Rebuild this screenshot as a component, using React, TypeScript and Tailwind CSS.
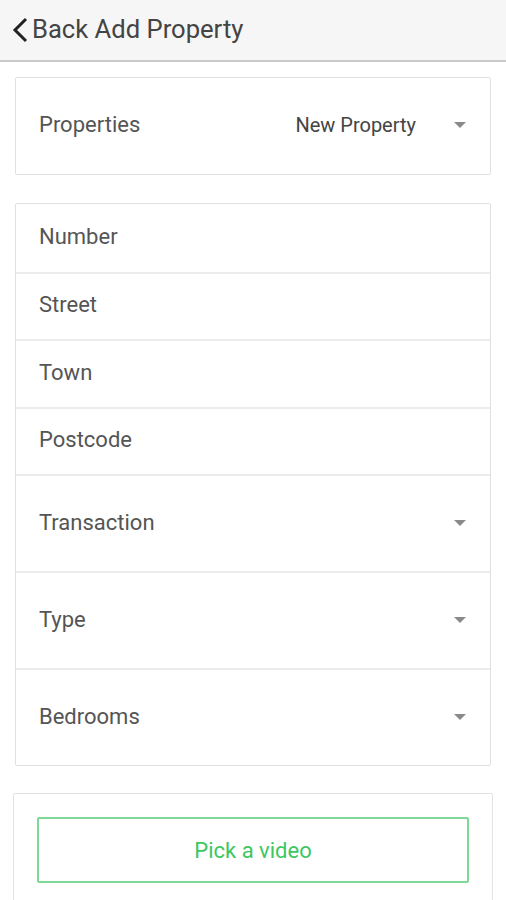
import React from 'react';

const Caret = () => (
    <svg width="14" height="8" viewBox="0 0 14 8" className="shrink-0">
        <path d="M1 1 L7 7 L13 1 Z" fill="#8a8a8a" />
    </svg>
);

const rows = [
    { label: 'Number', tall: false },
    { label: 'Street', tall: false },
    { label: 'Town', tall: false },
    { label: 'Postcode', tall: false },
    { label: 'Transaction', tall: true },
    { label: 'Type', tall: true },
    { label: 'Bedrooms', tall: true },
];

const App = () => {
    return (
        <div className="min-h-[900px] bg-white text-[#555] font-['Roboto',sans-serif] overflow-hidden">
            {/* Barra superior */}
            <div className="h-[62px] bg-[#f6f6f6] border-b-2 border-[#c9c9c9] flex items-center pl-[11px] pb-[1px]">
                <svg width="18" height="26" viewBox="0 0 18 26" className="mr-[3px]">
                    <path d="M15 2 L4 13 L15 24" fill="none" stroke="#222" strokeWidth="3" />
                </svg>
                <span className="text-[25.6px] text-[#444] leading-none">Back Add Property</span>
            </div>

            {/* Selector de propiedades */}
            <div className="mx-[15px] mt-[15px] h-[98px] border border-[#e0e0e0] rounded-[2px] flex items-center pl-[23px] pr-[23px] pb-[2px]">
                <span className="text-[22px] flex-1 leading-none">Properties</span>
                <span className="text-[20px] text-[#444] mr-[37px] leading-none">New Property</span>
                <Caret />
            </div>

            {/* Formulario */}
            <div className="mx-[15px] mt-[28px] border border-[#e0e0e0] rounded-[2px]">
                {rows.map((r, i) => (
                    <div
                        key={r.label}
                        className={`flex items-center pl-[23px] pr-[23px] pb-[2px] ${r.tall ? 'h-[97px]' : 'h-[67.5px]'} ${i > 0 ? 'border-t-2 border-[#ececec]' : ''}`}
                    >
                        <span className="text-[22px] flex-1 leading-none">{r.label}</span>
                        {r.tall && <Caret />}
                    </div>
                ))}
            </div>

            {/* Video */}
            <div className="mx-[13px] mt-[27px] h-[140px] border border-[#e3e3e3] rounded-[2px] px-[23px] pt-[23px]">
                <button className="w-full h-[66px] border-2 border-[#7dd995] rounded-[2px] text-[22px] text-[#3cc761] bg-white">
                    Pick a video
                </button>
            </div>
        </div>
    );
};

export default App;
